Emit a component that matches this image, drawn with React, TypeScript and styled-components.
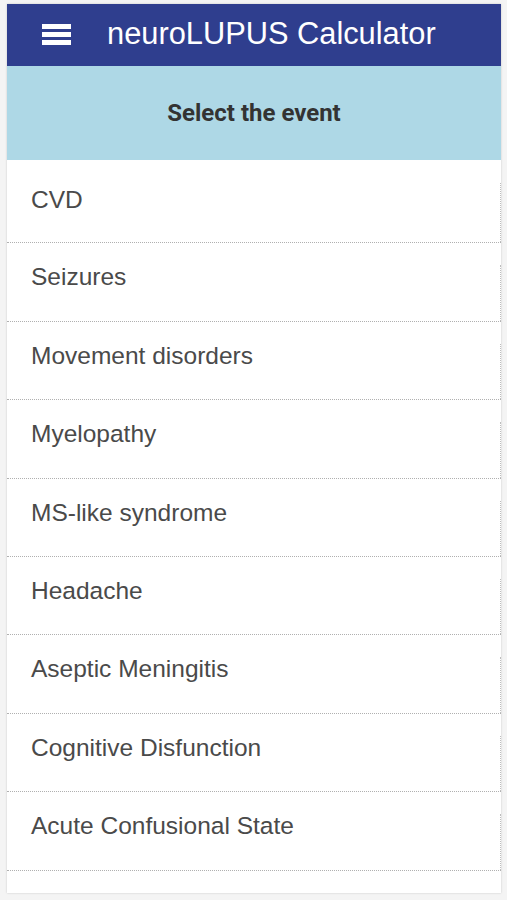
import React from "react";
import styled, { createGlobalStyle } from "styled-components";

const Global = createGlobalStyle`
  html, body { margin: 0; padding: 0; background: #f4f4f4; }
  body { font-family: "Liberation Sans", Arial, sans-serif; }
`;

const Page = styled.div`
  padding: 4px 6px 7px 7px;
  box-sizing: border-box;
  height: 900px;
`;

const Card = styled.div`
  background: #ffffff;
  box-shadow: 0 0 2px rgba(0, 0, 0, 0.18);
  height: 889px;
  overflow: hidden;
  display: flex;
  flex-direction: column;
`;

const Header = styled.header`
  height: 62px;
  background: #2f3e8e;
  display: flex;
  align-items: center;
  padding-left: 35px;
  gap: 36px;
  flex-shrink: 0;
`;

const Burger = styled.div`
  width: 29px;
  display: flex;
  flex-direction: column;
  gap: 3px;
  margin-top: -2px;
`;

const Bar = styled.span`
  display: block;
  height: 5px;
  background: #ffffff;
`;

const Title = styled.h1`
  margin: 0;
  color: #ffffff;
  font-family: "Liberation Sans", Arial, sans-serif;
  font-weight: 400;
  font-size: 30.8px;
  margin-top: -2px;
`;

const SubHeader = styled.div`
  height: 94px;
  background: #aed8e6;
  display: flex;
  align-items: center;
  justify-content: center;
  flex-shrink: 0;
`;

const SubTitle = styled.h2`
  margin: 0;
  font-family: Roboto, "Liberation Sans", sans-serif;
  font-weight: 700;
  font-size: 24px;
  color: #333333;
  margin-top: 0;
`;

const List = styled.ul`
  list-style: none;
  margin: 0;
  padding: 0;
  padding-top: 1px;
`;

const Row = styled.li<{ $first?: boolean }>`
  position: relative;
  box-sizing: border-box;
  height: ${(p) => (p.$first ? "82.4px" : "78.4px")};
  padding: ${(p) => (p.$first ? "25px" : "20px")} 0 0 24px;
  border-bottom: 1px dotted #b0b0b0;
  font-family: "Liberation Sans", Arial, sans-serif;
  font-size: 24.5px;
  color: #4a4a4a;
  line-height: 28px;

  &::after {
    content: "";
    position: absolute;
    right: 0;
    top: 22px;
    bottom: 0;
    border-right: 1px dotted #bdbdbd;
  }
`;

const events = [
  "CVD",
  "Seizures",
  "Movement disorders",
  "Myelopathy",
  "MS-like syndrome",
  "Headache",
  "Aseptic Meningitis",
  "Cognitive Disfunction",
  "Acute Confusional State",
  "",
];

export default function App() {
  return (
    <>
      <Global />
      <Page>
        <Card>
          <Header>
            <Burger>
              <Bar />
              <Bar />
              <Bar />
            </Burger>
            <Title>neuroLUPUS Calculator</Title>
          </Header>
          <SubHeader>
            <SubTitle>Select the event</SubTitle>
          </SubHeader>
          <List>
            {events.map((e, i) => (
              <Row key={i} $first={i === 0}>
                {e}
              </Row>
            ))}
          </List>
        </Card>
      </Page>
    </>
  );
}
